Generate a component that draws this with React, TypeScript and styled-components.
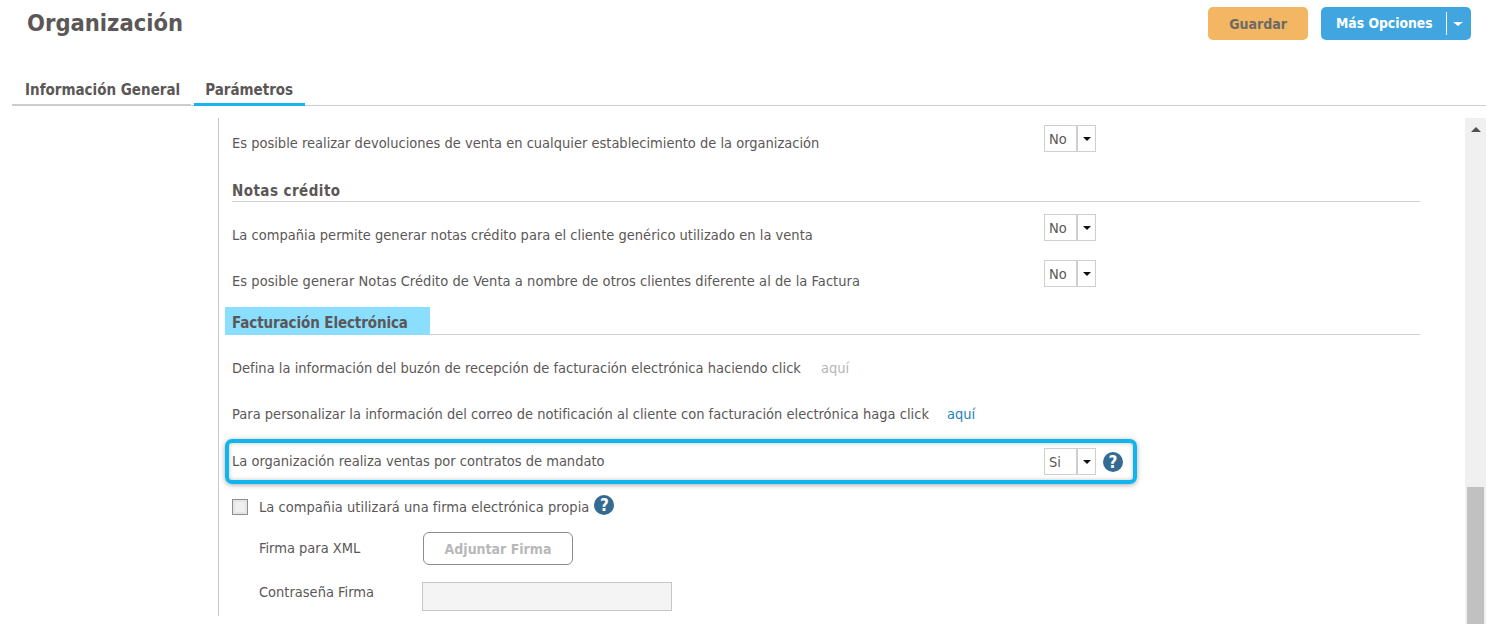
import React from 'react';
import styled, { createGlobalStyle } from 'styled-components';

const GlobalStyle = createGlobalStyle`
  html, body {
    margin: 0;
    padding: 0;
    background: #fff;
    overflow: hidden;
  }
  body {
    font-family: "DejaVu Sans Condensed", "DejaVu Sans", sans-serif;
    color: #5b5757;
  }
`;

const Page = styled.div`
  width: 1504px;
  height: 624px;
  overflow: hidden;
  display: flex;
  flex-direction: column;
`;

const Header = styled.header`
  height: 40px;
  box-sizing: border-box;
  display: flex;
  justify-content: space-between;
  padding: 7px 33px 0 27px;
`;

const Title = styled.h1`
  margin: 0;
  font-size: 23.5px;
  line-height: 32px;
  font-weight: 700;
  color: #5b5757;
`;

const Actions = styled.div`
  display: flex;
  gap: 13px;
  align-items: flex-start;
`;

const SaveButton = styled.button`
  width: 100px;
  height: 33px;
  border: 0;
  border-radius: 5px;
  background: #f3b662;
  color: #6d6a66;
  font: 700 14px "DejaVu Sans Condensed", "DejaVu Sans", sans-serif;
`;

const OptionsButton = styled.div`
  width: 150px;
  height: 33px;
  border-radius: 5px;
  background: #41a6df;
  color: #fff;
  display: flex;
  align-items: center;
  font-size: 13.8px;
  font-weight: 700;
`;

const OptionsLabel = styled.span`
  width: 126px;
  height: 23px;
  line-height: 22px;
  padding-left: 15px;
  box-sizing: border-box;
  border-right: 1px solid #fff;
`;

const Caret = styled.span<{ $size: number; $depth: number; $color: string }>`
  width: 0;
  height: 0;
  border-left: ${p => p.$size}px solid transparent;
  border-right: ${p => p.$size}px solid transparent;
  border-top: ${p => p.$depth}px solid ${p => p.$color};
`;

const OptionsCaret = styled(Caret)`
  margin-left: 6px;
`;

const Tabs = styled.nav`
  margin: 25px 18px 0 12px;
  height: 40px;
  border-bottom: 1px solid #cdcdcd;
  display: flex;
`;

const Tab = styled.div<{ $active?: boolean }>`
  padding: 13px ${p => (p.$active ? '12px 0 11px' : '11px 0 13px')};
  height: 41px;
  box-sizing: border-box;
  font-size: 15px;
  font-weight: 700;
  line-height: 24px;
  color: #5b5757;
  border-bottom: ${p => (p.$active ? '3px solid #1bb3ec' : '2px solid #cdcdcd')};
  margin-right: 3px;
`;

const Body = styled.div`
  flex: 1;
  min-height: 0;
  display: flex;
  margin: 12px 18px 0 218px;
`;

const Form = styled.main`
  flex: 1;
  height: 498px;
  border-left: 1px solid #c9c9c9;
  padding: 7px 0 0 13px;
  box-sizing: border-box;
  font-size: 14.5px;
`;

const Row = styled.div<{ $height: number; $top: number }>`
  width: 864px;
  height: ${p => p.$height}px;
  padding-top: ${p => p.$top}px;
  box-sizing: border-box;
  display: flex;
  justify-content: space-between;
  align-items: flex-start;
`;

const RowText = styled.span<{ $drop: number; $tracking?: number }>`
  line-height: 20px;
  padding-top: ${p => p.$drop}px;
  letter-spacing: ${p => p.$tracking ?? 0}px;
`;

const SelectBox = styled.div`
  width: 52px;
  height: 27px;
  box-sizing: border-box;
  border: 1px solid #cfcfcf;
  display: flex;
  background: #fff;
`;

const SelectValue = styled.span`
  width: 33px;
  padding-left: 4px;
  box-sizing: border-box;
  line-height: 27px;
  border-right: 2px solid #cfcfcf;
`;

const SelectCaret = styled.span`
  flex: 1;
  display: flex;
  align-items: center;
  justify-content: center;
`;

const Section = styled.h3<{ $gap?: number; $tracking?: number }>`
  display: flow-root;
  margin: ${p => p.$gap ?? 0}px 0 0;
  width: 1188px;
  height: 22px;
  box-sizing: border-box;
  line-height: 23px;
  font-size: 15px;
  font-weight: 700;
  letter-spacing: ${p => p.$tracking ?? 0}px;
  color: #5b5757;
  border-bottom: 1px solid #cfcfcf;
`;

const Marked = styled.span`
  display: block;
  width: 205px;
  height: 28px;
  margin: -6px 0 0 -7px;
  padding: 4px 0 0 7px;
  box-sizing: border-box;
  background: #8adfff;
  line-height: 24px;
`;

const LinkRow = styled.div<{ $height: number; $gap: number }>`
  height: ${p => p.$height}px;
  padding-top: 23px;
  box-sizing: border-box;
  display: flex;
  gap: ${p => p.$gap}px;
  align-items: flex-start;
  line-height: 20px;
  letter-spacing: 0.02px;
`;

const Link = styled.a<{ $muted?: boolean }>`
  color: ${p => (p.$muted ? '#b5b5b5' : '#1f7fb5')};
`;

const Highlight = styled.div`
  width: 912px;
  height: 45px;
  margin-left: -7px;
  box-sizing: border-box;
  border: 4px solid #0fb5ec;
  border-radius: 7px;
  box-shadow: 0 1px 5px rgba(0, 0, 0, 0.35), inset 0 0 4px rgba(0, 0, 0, 0.25);
  padding: 0 10px 0 3px;
  display: flex;
  align-items: center;
  justify-content: space-between;
`;

const HighlightText = styled.span`
  padding-bottom: 2px;
`;

const HighlightEnd = styled.div`
  display: flex;
  align-items: center;
  gap: 7px;
`;

const HelpIcon = styled.span`
  width: 20px;
  height: 20px;
  border-radius: 50%;
  background: #336b93;
  color: #fff;
  font-size: 17px;
  font-weight: 700;
  line-height: 20px;
  text-align: center;
  flex: none;
`;

const CheckRow = styled.div`
  height: 35px;
  margin-top: 13px;
  display: flex;
  align-items: flex-start;
  line-height: 20px;
`;

const CheckBox = styled.span`
  width: 16px;
  height: 16px;
  box-sizing: border-box;
  border: 1px solid #8f8f8f;
  box-shadow: inset 0 0 0 2px #e4e4e4;
  background: #efefef;
  margin: 2px 11px 0 0;
`;

const CheckLabel = styled.span`
  margin-right: 5px;
  letter-spacing: 0.04px;
`;

const CheckHelp = styled(HelpIcon)`
  margin-top: -2px;
`;

const FieldRow = styled.div<{ $height: number }>`
  height: ${p => p.$height}px;
  display: flex;
  align-items: flex-start;
  padding-left: 27px;
`;

const FieldLabel = styled.label<{ $drop: number }>`
  width: 164px;
  flex: none;
  line-height: 20px;
  padding-top: ${p => p.$drop}px;
`;

const AttachButton = styled.button`
  width: 150px;
  height: 33px;
  border: 1px solid #8c8c8c;
  border-radius: 6px;
  background: #fff;
  color: #b8b8b8;
  font: 700 14px "DejaVu Sans Condensed", "DejaVu Sans", sans-serif;
`;

const PasswordInput = styled.div`
  width: 250px;
  height: 29px;
  box-sizing: border-box;
  border: 1px solid #c6c6c6;
  background: #f4f4f4;
  margin: 4px 0 0 -1px;
`;

const Scrollbar = styled.div`
  width: 21px;
  height: 506px;
  flex: none;
  background: #f0f0f0;
  display: flex;
  flex-direction: column;
  align-items: center;
`;

const ScrollUp = styled.span`
  margin-top: 9px;
  width: 0;
  height: 0;
  border-left: 5px solid transparent;
  border-right: 5px solid transparent;
  border-bottom: 5px solid #505050;
`;

const ScrollThumb = styled.span`
  margin-top: auto;
  width: 17px;
  height: 137px;
  background: #c1c1c1;
`;

function Select({ value }: { value: string }) {
  return (
    <SelectBox>
      <SelectValue>{value}</SelectValue>
      <SelectCaret>
        <Caret $size={4} $depth={4} $color="#111" />
      </SelectCaret>
    </SelectBox>
  );
}

export default function App() {
  return (
    <Page>
      <GlobalStyle />
      <Header>
        <Title>Organización</Title>
        <Actions>
          <SaveButton>Guardar</SaveButton>
          <OptionsButton>
            <OptionsLabel>Más Opciones</OptionsLabel>
            <OptionsCaret $size={5} $depth={4} $color="#fff" />
          </OptionsButton>
        </Actions>
      </Header>
      <Tabs>
        <Tab>Información General</Tab>
        <Tab $active>Parámetros</Tab>
      </Tabs>
      <Body>
        <Form>
          <Row $height={55} $top={0}>
            <RowText $drop={8}>Es posible realizar devoluciones de venta en cualquier establecimiento de la organización</RowText>
            <Select value="No" />
          </Row>
          <Section $tracking={0.45}>Notas crédito</Section>
          <Row $height={46} $top={12}>
            <RowText $drop={11} $tracking={0.02}>La compañia permite generar notas crédito para el cliente genérico utilizado en la venta</RowText>
            <Select value="No" />
          </Row>
          <Row $height={46} $top={12}>
            <RowText $drop={11} $tracking={0.06}>Es posible generar Notas Crédito de Venta a nombre de otros clientes diferente al de la Factura</RowText>
            <Select value="No" />
          </Row>
          <Section $gap={19} $tracking={-0.1}>
            <Marked>Facturación Electrónica</Marked>
          </Section>
          <LinkRow $height={46} $gap={20}>
            <span>Defina la información del buzón de recepción de facturación electrónica haciendo click</span>
            <Link $muted>aquí</Link>
          </LinkRow>
          <LinkRow $height={58} $gap={18}>
            <span>Para personalizar la información del correo de notificación al cliente con facturación electrónica haga click</span>
            <Link>aquí</Link>
          </LinkRow>
          <Highlight>
            <HighlightText>La organización realiza ventas por contratos de mandato</HighlightText>
            <HighlightEnd>
              <Select value="Si" />
              <HelpIcon>?</HelpIcon>
            </HighlightEnd>
          </Highlight>
          <CheckRow>
            <CheckBox />
            <CheckLabel>La compañia utilizará una firma electrónica propia</CheckLabel>
            <CheckHelp>?</CheckHelp>
          </CheckRow>
          <FieldRow $height={46}>
            <FieldLabel $drop={6}>Firma para XML</FieldLabel>
            <AttachButton>Adjuntar Firma</AttachButton>
          </FieldRow>
          <FieldRow $height={40}>
            <FieldLabel $drop={4}>Contraseña Firma</FieldLabel>
            <PasswordInput />
          </FieldRow>
        </Form>
        <Scrollbar>
          <ScrollUp />
          <ScrollThumb />
        </Scrollbar>
      </Body>
    </Page>
  );
}
